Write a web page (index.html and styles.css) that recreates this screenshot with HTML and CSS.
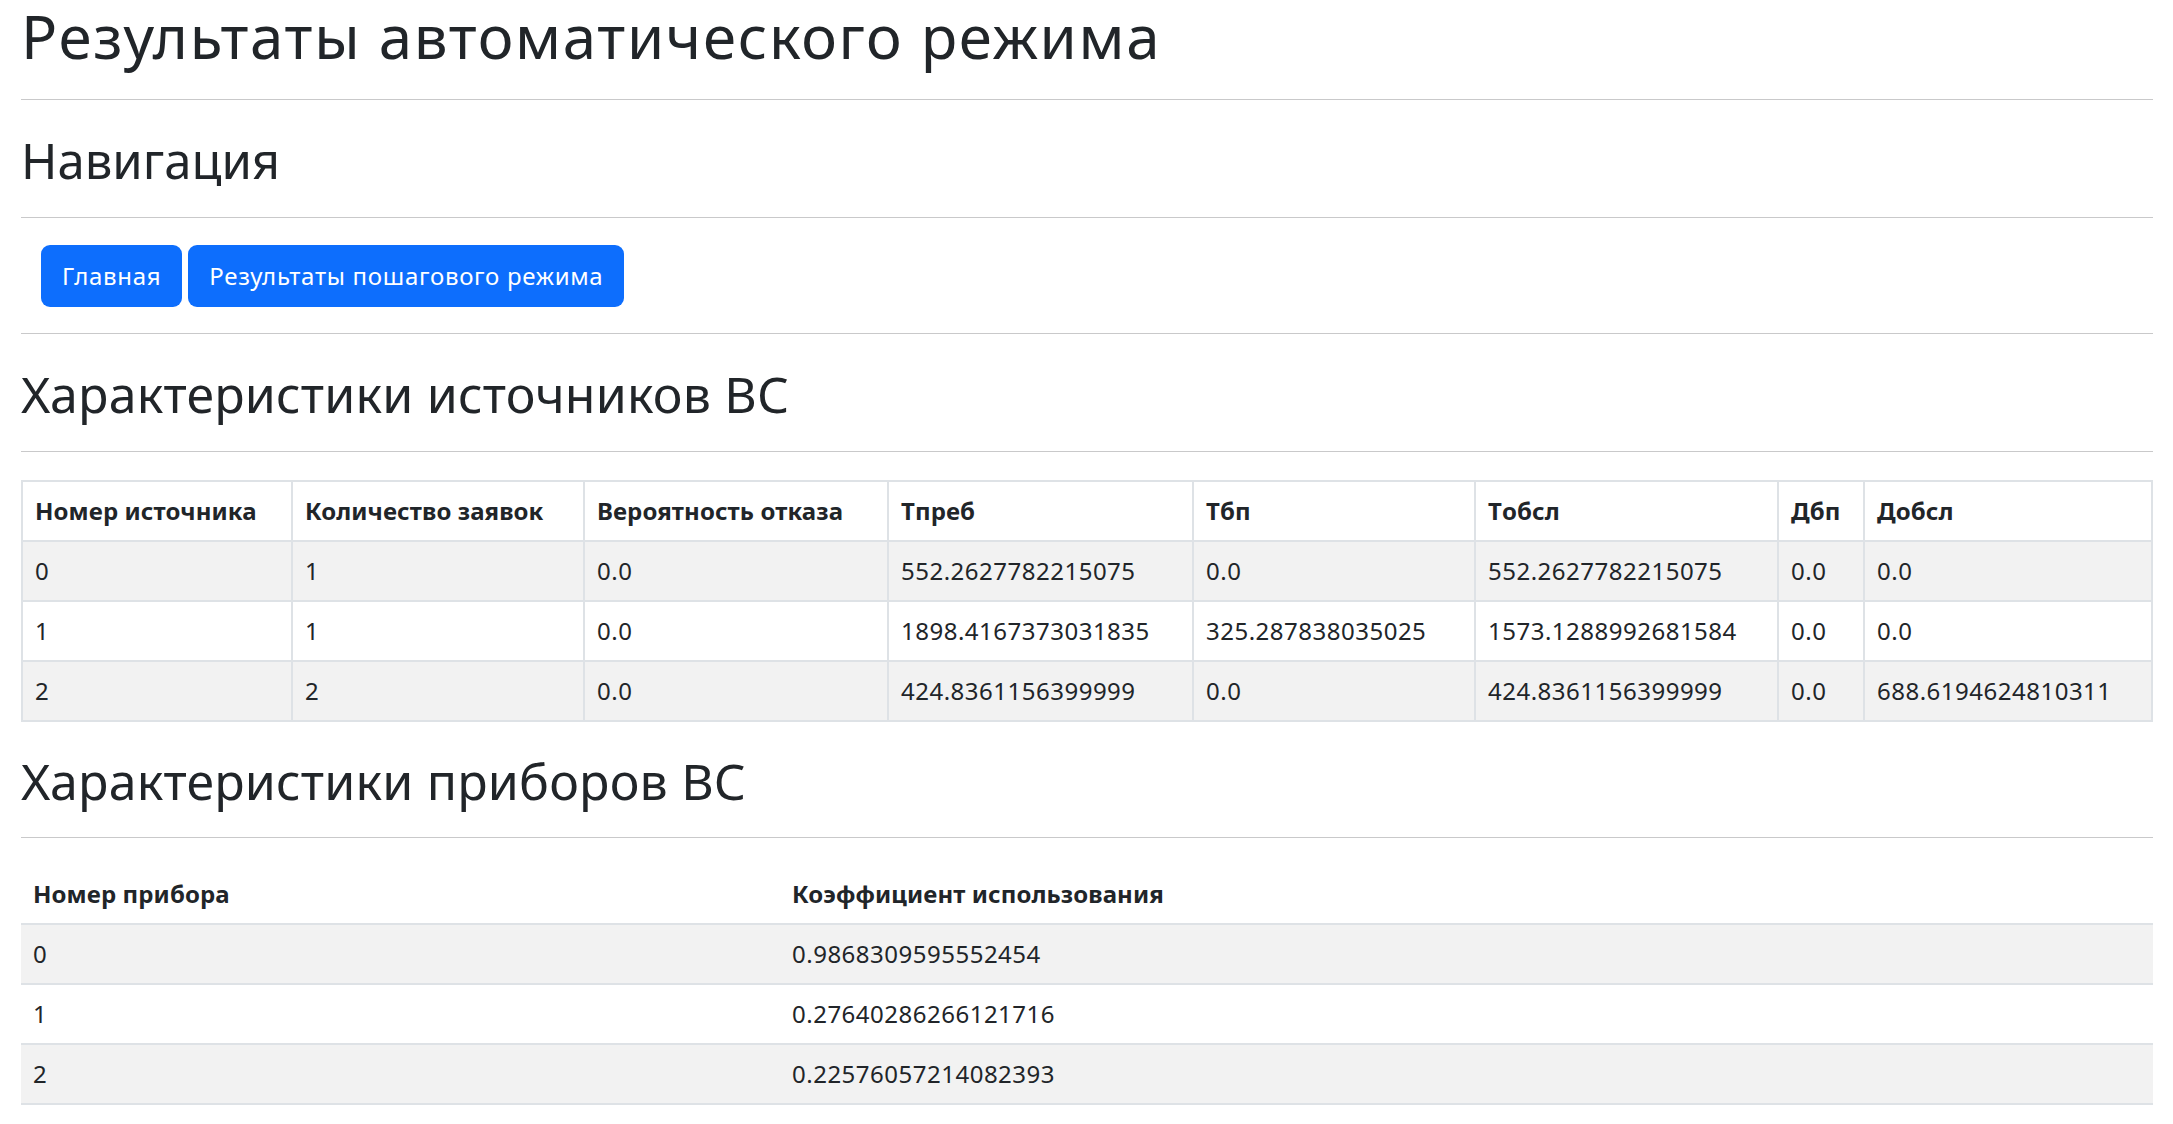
FILE: index.html
```html
<!DOCTYPE html>
<html lang="ru">
<head>
<meta charset="utf-8">
<title>Результаты автоматического режима</title>
<link rel="stylesheet" href="styles.css">
</head>
<body>
<div class="page">
  <h1 class="title">Результаты автоматического режима</h1>
  <hr class="rule">
  <h2 class="heading heading-nav">Навигация</h2>
  <hr class="rule">
  <nav class="nav">
    <a class="btn" href="#">Главная</a>
    <a class="btn" href="#">Результаты пошагового режима</a>
  </nav>
  <hr class="rule">
  <h2 class="heading heading-first">Характеристики источников ВС</h2>
  <hr class="rule">
  <table class="tbl tbl-bordered">
    <colgroup>
      <col class="c1"><col class="c2"><col class="c3"><col class="c4"><col class="c5"><col class="c6"><col class="c7"><col class="c8">
    </colgroup>
    <thead>
      <tr><th>Номер источника</th><th>Количество заявок</th><th>Вероятность отказа</th><th>Tпреб</th><th>Tбп</th><th>Tобсл</th><th>Дбп</th><th>Добсл</th></tr>
    </thead>
    <tbody>
      <tr><td>0</td><td>1</td><td>0.0</td><td>552.2627782215075</td><td>0.0</td><td>552.2627782215075</td><td>0.0</td><td>0.0</td></tr>
      <tr><td>1</td><td>1</td><td>0.0</td><td>1898.4167373031835</td><td>325.287838035025</td><td>1573.1288992681584</td><td>0.0</td><td>0.0</td></tr>
      <tr><td>2</td><td>2</td><td>0.0</td><td>424.8361156399999</td><td>0.0</td><td>424.8361156399999</td><td>0.0</td><td>688.6194624810311</td></tr>
    </tbody>
  </table>
  <h2 class="heading heading-second">Характеристики приборов ВС</h2>
  <hr class="rule">
  <table class="tbl tbl-plain">
    <colgroup>
      <col class="d1"><col class="d2">
    </colgroup>
    <thead>
      <tr><th>Номер прибора</th><th>Коэффициент использования</th></tr>
    </thead>
    <tbody>
      <tr><td>0</td><td>0.9868309595552454</td></tr>
      <tr><td>1</td><td>0.27640286266121716</td></tr>
      <tr><td>2</td><td>0.22576057214082393</td></tr>
    </tbody>
  </table>
</div>
</body>
</html>
```

FILE: styles.css
```css
* { box-sizing: border-box; }

html, body {
  margin: 0;
  padding: 0;
  background: #ffffff;
}

body {
  font-family: "Noto Sans", "Open Sans", sans-serif;
  color: #212529;
  font-size: 24px;
  line-height: 36px;
}

.page {
  padding: 0 20px 0 21px;
  display: flex;
  flex-direction: column;
}

.rule {
  margin: 0;
  border: 0;
  height: 1px;
  background: #c9c9ca;
}

.title {
  margin: 0 0 27px 0;
  font-size: 60px;
  line-height: 72px;
  font-weight: 400;
  letter-spacing: 1.7px;
}

.heading {
  font-weight: 400;
  margin: 0;
}

.heading-nav {
  font-size: 49px;
  line-height: 60px;
  margin: 30px 0 27px;
}

.heading-first,
.heading-second {
  font-size: 50px;
  line-height: 64px;
  letter-spacing: 0.2px;
}

.heading-first {
  margin: 28px 0 25px;
}

.heading-second {
  margin: 27px 0 24px;
}

.nav {
  display: flex;
  gap: 6px;
  padding-left: 20px;
  margin: 27px 0 26px;
}

.btn {
  display: inline-flex;
  align-items: center;
  height: 62px;
  padding: 0 21px;
  background: #0d6efd;
  color: #ffffff;
  border-radius: 9px;
  text-decoration: none;
  font-size: 24px;
  letter-spacing: 0.7px;
}

.tbl {
  width: 100%;
  table-layout: fixed;
  border-collapse: collapse;
  margin-top: 28px;
}

.tbl th,
.tbl td {
  text-align: left;
  padding: 11px 12px;
  line-height: 36px;
  white-space: nowrap;
  border-bottom: 2px solid #dee2e6;
}

.tbl th {
  font-weight: 700;
  letter-spacing: 0.1px;
}

.tbl td {
  letter-spacing: 0.5px;
}

.tbl tbody tr:nth-child(odd) {
  background: #f2f2f2;
}

.tbl-bordered {
  border: 2px solid #dee2e6;
}

.tbl-bordered th,
.tbl-bordered td {
  border: 2px solid #dee2e6;
}

.tbl-plain {
  margin-top: 27px;
}

.c1 { width: 270px; }
.c2 { width: 292px; }
.c3 { width: 304px; }
.c4 { width: 305px; }
.c5 { width: 282px; }
.c6 { width: 303px; }
.c7 { width: 86px; }
.c8 { width: auto; }

.d1 { width: 759px; }
.d2 { width: auto; }
```
